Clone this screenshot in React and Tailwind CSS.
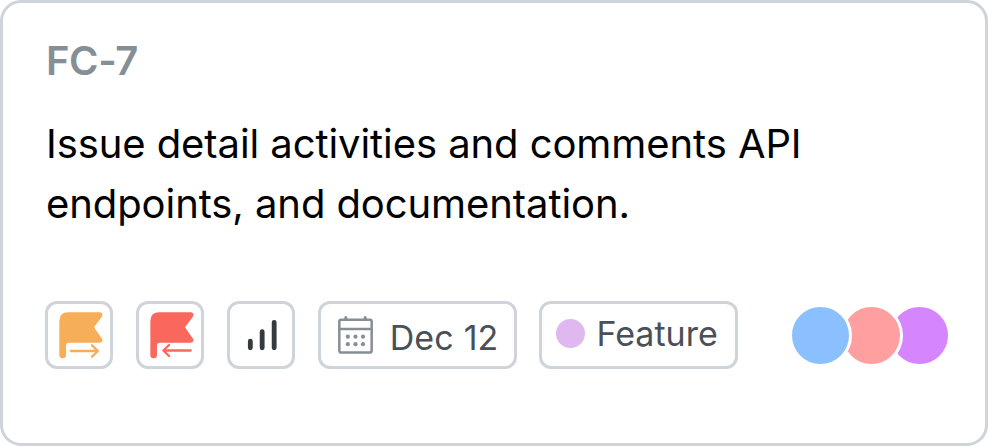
const FLAG =
  "M42 161V60Q42 33 69 33H162C171 33 174 40 169 47L146 78L169 111C174 118 171 124 162 124H70Q62 124 62 132V161A10 10 0 0 1 42 161Z";

function Badge({ children, className = "" }) {
  return (
    <div
      className={`flex h-[68px] shrink-0 rounded-[12px] border-[3px] border-[#ced4da] bg-white ${className}`}
    >
      {children}
    </div>
  );
}

function FlagIcon({ color, arrow }) {
  return (
    <svg viewBox="8 8 186 186" className="size-full">
      <path d={FLAG} fill={color} />
      <path
        d={arrow}
        fill="none"
        stroke={color}
        strokeWidth="7"
        strokeLinecap="round"
        strokeLinejoin="round"
      />
    </svg>
  );
}

function BarsIcon() {
  return (
    <svg viewBox="9 9 186 186" className="size-full">
      <path
        d="M70 120.500V140.500M105.500 92V140.500M141.500 64V140.500"
        stroke="#343a40"
        strokeWidth="14.500"
        strokeLinecap="round"
      />
    </svg>
  );
}

function CalendarIcon() {
  return (
    <svg viewBox="0 0 105 114" className="mt-[12px] ml-[17px] h-[38px] w-[35px] shrink-0">
      <g fill="none" stroke="#868e96" strokeWidth="7.500" strokeLinecap="round">
        <rect x="4" y="11.500" width="97" height="98" rx="5" />
        <path d="M4 39H101" />
        <path d="M23.500 4.500V9M81.500 4.500V9" strokeWidth="9" />
      </g>
      <g fill="#868e96">
        {[29.5, 52.5, 75].map((x) =>
          [62, 84.5].map((y) => <circle key={`${x}-${y}`} cx={x} cy={y} r="6.3" />)
        )}
      </g>
    </svg>
  );
}

export default function App() {
  return (
    <main className="h-[446px] w-[988px] overflow-hidden rounded-[21px] border-[3px] border-[#ced4da] bg-white pt-[34px] pr-[34px] pl-[42px] font-['Inter',sans-serif]">
      <h2 className="pl-px text-[40px] leading-[48px] font-semibold tracking-[-0.4px] text-[#868e96]">FC-7</h2>
      <p className="mt-[29px] pl-px text-[40px] leading-[60px] tracking-[-0.08px] text-black">
        Issue detail activities and comments API
        <br />
        endpoints, and documentation.
      </p>
      <div className="mt-[67px] flex justify-between">
        <div className="flex gap-[22.8px] pl-[0.3px]">
          <Badge className="w-[68px]">
            <FlagIcon color="#f7ae59" arrow="M77 149H158M140 132L158 149L140 166" />
          </Badge>
          <Badge className="w-[68px]">
            <FlagIcon color="#fa675c" arrow="M163 147.500H81M98 131L81 147.500L98 164" />
          </Badge>
          <Badge className="w-[68px]">
            <BarsIcon />
          </Badge>
          <Badge className="w-[199px]">
            <CalendarIcon />
            <span className="mt-[13px] ml-[17px] text-[34px] leading-[42px] tracking-[0.15px] whitespace-nowrap text-[#495057]">
              Dec 12
            </span>
          </Badge>
          <Badge className="w-[199px]">
            <span className="mt-[15px] ml-[14px] size-[29px] shrink-0 rounded-full bg-[#dfb8f0]" />
            <span className="mt-[9px] ml-[11px] text-[34px] leading-[42px] whitespace-nowrap text-[#495057]">
              Feature
            </span>
          </Badge>
        </div>
        <div className="mt-[3px] flex">
          <span className="z-20 size-[63px] shrink-0 rounded-full border-3 border-white bg-[#8bc0ff]" />
          <span className="z-10 -ml-[12px] size-[63px] shrink-0 rounded-full border-3 border-white bg-[#ff9f9f]" />
          <span className="-ml-[15px] size-[63px] shrink-0 rounded-full border-3 border-white bg-[#d586ff]" />
        </div>
      </div>
    </main>
  );
}
